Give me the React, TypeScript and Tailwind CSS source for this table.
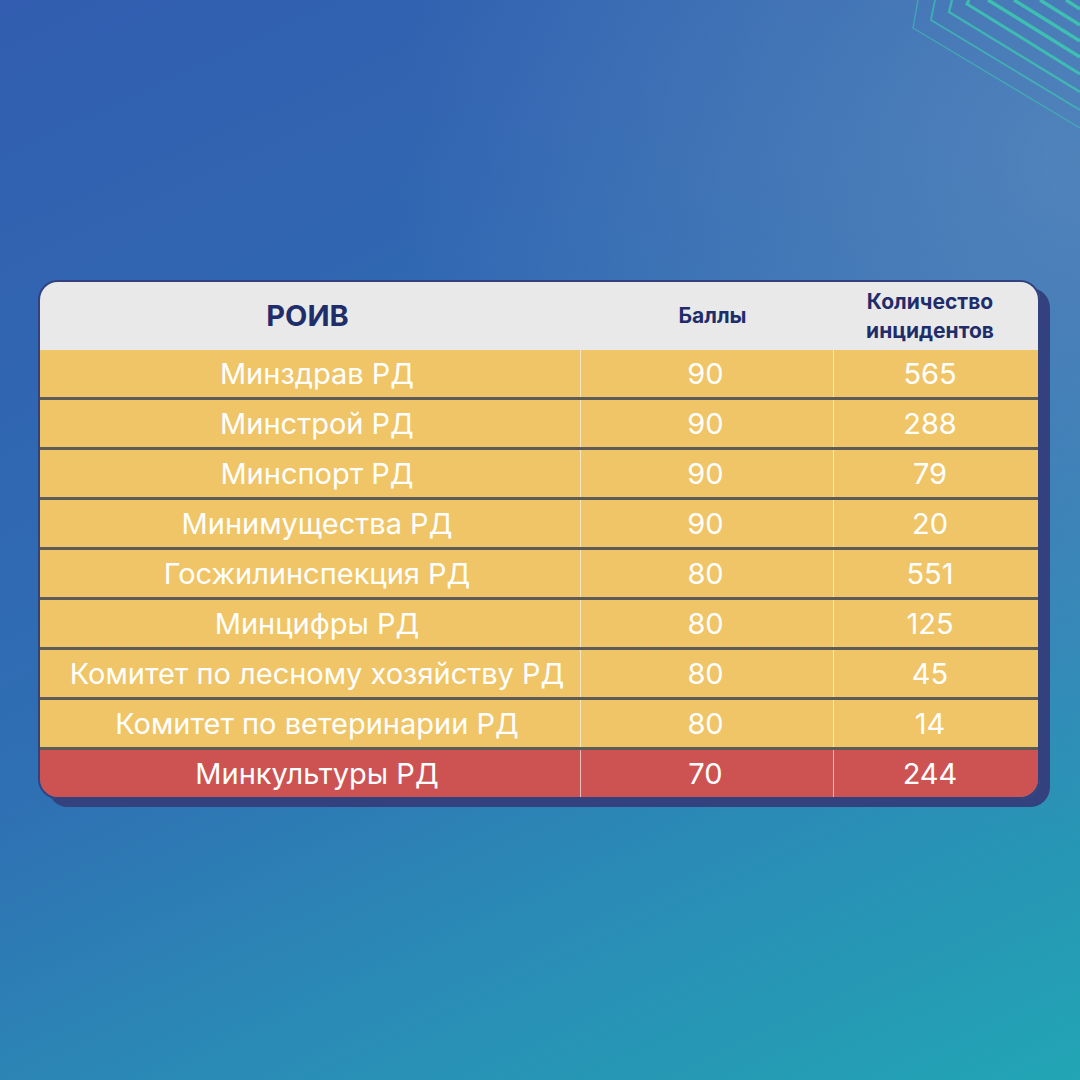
const rows = [
  { name: 'Минздрав РД', score: 90, count: 565 },
  { name: 'Минстрой РД', score: 90, count: 288 },
  { name: 'Минспорт РД', score: 90, count: 79 },
  { name: 'Минимущества РД', score: 90, count: 20 },
  { name: 'Госжилинспекция РД', score: 80, count: 551 },
  { name: 'Минцифры РД', score: 80, count: 125 },
  { name: 'Комитет по лесному хозяйству РД', score: 80, count: 45 },
  { name: 'Комитет по ветеринарии РД', score: 80, count: 14 },
  { name: 'Минкультуры РД', score: 70, count: 244 },
];

const CornerLines = () => {
  const lines = [
    { d: 'M38 0 L33 28 L200 128', w: 1.4, o: 0.6 },
    { d: 'M55 0 L51 20 L200 110', w: 1.8, o: 0.7 },
    { d: 'M72 0 L69 12 L200 92', w: 2.4, o: 0.8 },
    { d: 'M89 0 L87 4 L200 74', w: 3, o: 0.9 },
    { d: 'M108 0 L200 57', w: 3.4, o: 0.95 },
    { d: 'M134 0 L200 41', w: 3.4, o: 0.95 },
    { d: 'M160 0 L200 25', w: 3.4, o: 0.95 },
    { d: 'M186 0 L200 9', w: 3.4, o: 0.95 },
  ];
  return (
    <svg className="absolute top-0 right-0" width="200" height="140" viewBox="0 0 200 140" fill="none">
      {lines.map((l, i) => (
        <path key={i} d={l.d} stroke="#3ec3b0" strokeWidth={l.w} strokeOpacity={l.o} />
      ))}
    </svg>
  );
};

export default function App() {
  return (
    <div
      className="relative w-[1080px] h-[1080px] overflow-hidden pt-[280px] pl-[38px] bg-[radial-gradient(circle_at_100%_15%,rgba(95,140,190,0.7)_0%,rgba(95,140,190,0)_48%),linear-gradient(155deg,#325db0_0%,#2f6fb3_50%,#2a8cb6_75%,#22a5b4_100%)]"
      style={{ fontFamily: 'Inter, "Noto Sans", sans-serif' }}
    >
      <CornerLines />

      <div className="w-[1002px] border-2 border-[#33417f] rounded-[20px] overflow-hidden shadow-[10px_8px_0_#33417f]">
        {/* header */}
        <div className="grid grid-cols-[541px_253px_1fr] h-[68px] bg-[#e9e9e9] text-[#1f2d6b] font-bold">
          <div className="flex items-center justify-center pr-[6px] text-[29px]">РОИВ</div>
          <div className="flex items-center justify-center pl-[10px] text-[21px]">Баллы</div>
          <div className="flex items-center justify-center pr-[12px] text-[21px] leading-[29px] text-center">
            Количество
            <br />
            инцидентов
          </div>
        </div>

        {/* body */}
        {rows.map((r, i) => {
          const last = i === rows.length - 1;
          return (
            <div
              key={r.name}
              className={`grid grid-cols-[541px_253px_1fr] h-[47px] text-white text-[29px] ${
                last ? 'bg-[#cd5353]' : 'bg-[#f0c567] border-b-[3px] border-[#5c5b57] h-[50px]'
              }`}
            >
              <div className="flex items-center justify-center pl-[14px] border-r border-white/60 whitespace-nowrap">
                {r.name}
              </div>
              <div className="flex items-center justify-center pr-[3px] border-r border-white/60">{r.score}</div>
              <div className="flex items-center justify-center pr-[12px]">{r.count}</div>
            </div>
          );
        })}
      </div>
    </div>
  );
}
